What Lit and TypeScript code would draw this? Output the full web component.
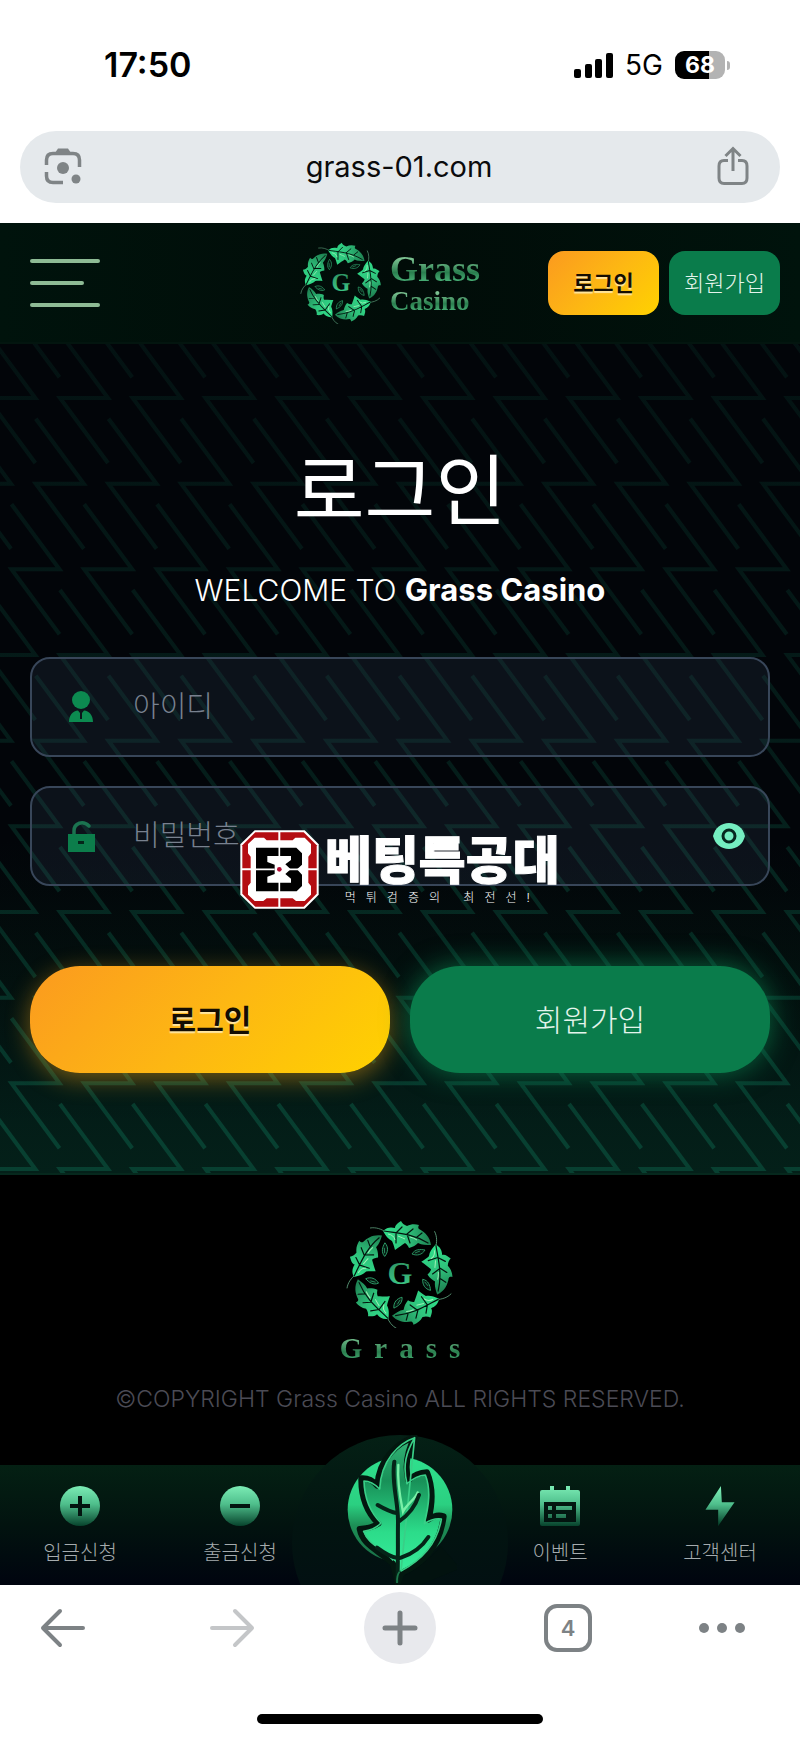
import { LitElement, html, css, svg, unsafeCSS } from "lit";
import { customElement, state } from "lit/decorators.js";

/* Repeating zigzag tile: 11 strokes across, three staggered rows. */
const zigzagTile = (() => {
  const stepX = 800 / 11;
  const stepY = 257 / 3;
  let d = "";
  for (let row = -1; row <= 3; row++) {
    const y = 56 + row * stepY;
    for (let col = -2; col <= 12; col++) {
      const x = 60 + col * stepX - (row * stepX) / 3;
      d += `M${x.toFixed(1)} ${(y - 65).toFixed(1)}l48 65h-48l48 65`;
    }
  }
  const image = `<svg xmlns="http://www.w3.org/2000/svg" width="800" height="257"><path d="${d}" fill="none" stroke="#0a5a45" stroke-opacity=".55" stroke-width="4"/></svg>`;
  return unsafeCSS(`url("data:image/svg+xml,${encodeURIComponent(image)}")`);
})();

@customElement("grass-wreath")
export class GrassWreath extends LitElement {
  static styles = css`
    :host { display: block; }
    .art { display: block; width: 100%; height: 100%; }
    .initial { font: bold 32px "Liberation Serif", serif; }
  `;

  render() {
    return html`
      <svg class="art" viewBox="-54 -54 108 108" role="img" aria-label="Grass Casino">
        <defs>
          <linearGradient id="leaf" x1="0" y1="0" x2="1" y2="0">
            <stop offset="0" stop-color="#2fe08a" /><stop offset=".5" stop-color="#2fc37c" /><stop offset="1" stop-color="#1d7f50" />
          </linearGradient>
          <linearGradient id="letter" x1="0" y1="0" x2="0" y2="1">
            <stop offset="0" stop-color="#2c8a5c" /><stop offset="1" stop-color="#3fcf8c" />
          </linearGradient>
        </defs>
        ${[0, 72, 144, 216, 288].map(
          (angle) => svg`
          <g transform="rotate(${angle})">
            <path d="M-30-46C-24-47-19-45-14-42" fill="none" stroke="#5d9d7b" stroke-width=".8" />
            <path d="M-17-43C-13-47-9-47-5-46C-5-49-2-51 1-53C2-51 4-49 7-48C11-50 15-50 19-49C18-47 18-46 19-45C25-42 30-37 31-29C26-29 22-29 18-31C16-29 13-27 9-26C8-28 7-30 5-31C2-29-1-27-5-24C-6-28-7-31-8-33C-12-35-14-38-17-43Z" fill="url(#leaf)" />
            <path d="M-16-43C-5-41 12-41 28-31M-4-41L2-47M-4-41L-4-31M7-40L13-45M7-40L10-31M17-37L22-41" fill="none" stroke="#03140d" stroke-width="1.2" stroke-linecap="round" />
            <path d="M-12-40Q-6-39-5-34M-2-38Q3-36 5-35M10-37Q14-36 17-34" fill="none" stroke="#9df0b4" stroke-width="1" />
            <path d="M12-20C15-25 20-25 25-24C22-19 17-18 12-20Z" fill="#05160f" stroke="#2c9b67" stroke-width=".9" />
            <path d="M15-21L20-23" stroke="#2c9b67" stroke-width=".8" />
          </g>`
        )}
        <text class="initial" x="0" y="10" text-anchor="middle" fill="url(#letter)">G</text>
      </svg>
    `;
  }
}

@customElement("app-root")
export class AppRoot extends LitElement {
  @state() private passwordVisible = false;

  static styles = css`
    :host {
      display: block;
      background: #fff;
      color: #fff;
      font-family: Inter, "Noto Sans CJK KR", sans-serif;
    }
    * { box-sizing: border-box; }
    svg { display: block; }
    a { color: inherit; text-decoration: none; }
    button { border: 0; padding: 0; background: none; font-family: inherit; cursor: pointer; }

    .status {
      display: flex;
      justify-content: space-between;
      align-items: center;
      padding: 45px 70px 46px 104px;
      color: #000;
    }
    .clock { font-size: 34px; line-height: 40px; font-weight: 600; }
    .signals { display: flex; align-items: center; gap: 12px; }
    .network { font-size: 28px; line-height: 32px; }
    .battery { display: flex; align-items: center; gap: 2px; }
    .charge {
      width: 50px;
      border-radius: 9px;
      background: linear-gradient(90deg, #000 68%, #b3b3b3 68%);
      color: #fff;
      font-size: 23px;
      line-height: 28px;
      font-weight: 700;
      text-align: center;
    }
    .terminal { width: 3px; height: 9px; border-radius: 0 3px 3px 0; background: #b3b3b3; }

    .address {
      display: flex;
      align-items: center;
      justify-content: space-between;
      margin: 0 20px 20px;
      padding: 0 26px 2px 24px;
      height: 72px;
      border-radius: 36px;
      background: #e5e9ec;
      color: #0b0b0c;
      font-size: 29px;
    }

    .header {
      display: grid;
      grid-template-columns: 270px 1fr auto;
      align-items: center;
      padding: 18px 20px 18px 30px;
      height: 119px;
      background: linear-gradient(90deg, #00130c, #010c08 50%, #00130c);
    }
    .menu { display: grid; gap: 18px; width: 70px; }
    .bar { height: 4px; border-radius: 2px; background: #8ebb95; }
    .bar.short { width: 54px; }
    .brand { display: flex; align-items: center; gap: 8px; }
    .brand-wreath { width: 82px; height: 82px; }
    .brand-name {
      display: grid;
      font-family: "Liberation Serif", serif;
      font-weight: 700;
    }
    .metal {
      background: linear-gradient(#7ec493 20%, #2a7f4f 60%, #4fb97e 90%);
      -webkit-background-clip: text;
      background-clip: text;
      color: transparent;
    }
    .brand-first { font-size: 36px; line-height: 36px; }
    .brand-second { font-size: 27px; line-height: 28px; }
    .account { display: flex; justify-content: flex-end; gap: 10px; }
    .gold {
      background: linear-gradient(135deg, #fb9a1f, #fdb713 50%, #ffd200);
      color: #140d02;
      font-weight: 700;
      text-shadow: 0 2px 1px #ffe6a0;
    }
    .green { background: #0a7c4b; color: #e4f4ec; font-weight: 300; }
    .small { width: 111px; height: 64px; padding-bottom: 4px; border-radius: 16px; font-size: 22px; }

    .login {
      position: relative;
      padding: 103px 30px 100px;
      border-top: 2px solid #03150f;
      background:
        linear-gradient(rgba(2, 5, 9, 0.72), rgba(2, 5, 9, 0.5) 50%, rgba(2, 8, 10, 0) 95%),
        ${zigzagTile} 0 -2px / 800px 257px,
        linear-gradient(#020509 60%, #03120f 75%, #031c17 92%, #042019);
    }
    .title { margin: 0; font-size: 77px; line-height: 88px; font-weight: 400; text-align: center; }
    .welcome { margin: 35px 0 47px; font-size: 30px; line-height: 40px; font-weight: 300; text-align: center; }
    .welcome strong { font-size: 31px; font-weight: 700; }
    .fields { display: grid; gap: 29px; }
    .field {
      display: flex;
      align-items: center;
      height: 100px;
      padding: 0 23px 0 29px;
      border: 2px solid #384659;
      border-radius: 20px;
      background: rgba(60, 78, 106, 0.18);
    }
    .field-icon { width: 72px; padding-left: 4px; }
    .input {
      flex: 1;
      min-width: 0;
      border: 0;
      outline: 0;
      padding: 0;
      background: none;
      color: #fff;
      font: 300 29px/44px Inter, "Noto Sans CJK KR", sans-serif;
    }
    .input::placeholder { color: #78818f; opacity: 1; }
    .actions { display: grid; grid-template-columns: 1fr 1fr; gap: 20px; margin-top: 80px; }
    .big { height: 107px; padding-bottom: 4px; border-radius: 50px; font-size: 30px; }
    .big.gold { box-shadow: 0 6px 24px rgba(253, 170, 20, 0.45); }
    .big.green { box-shadow: 0 0 28px rgba(10, 140, 84, 0.7); }

    .watermark {
      position: absolute;
      top: 486px;
      left: 30%;
      display: flex;
      align-items: center;
      gap: 6px;
    }
    .wm-text { display: grid; justify-items: center; }
    .wm-name { font-size: 51px; line-height: 56px; font-weight: 900; -webkit-text-stroke: 1px #fff; }
    .wm-line { font-size: 12px; line-height: 18px; font-weight: 300; letter-spacing: 10px; }

    .footer {
      display: grid;
      justify-items: center;
      padding: 45px 20px 51px;
      border-top: 2px solid #06281d;
      background: #000;
    }
    .footer-wreath { width: 108px; height: 108px; }
    .footer-name {
      font: bold 29px/40px "Liberation Serif", serif;
      letter-spacing: 12px;
      padding-left: 12px;
    }
    .copyright { margin: 16px 0 0; color: #4b4b55; font-size: 23px; line-height: 30px; font-weight: 300; }

    .tabs {
      position: relative;
      display: grid;
      grid-template-columns: repeat(5, 1fr);
      height: 120px;
      background: linear-gradient(#042013, #02130f 50%, #00040f);
    }
    .tab {
      display: grid;
      align-content: start;
      justify-items: center;
      gap: 12px;
      padding-top: 21px;
      color: #a5acae;
      font-size: 20px;
      line-height: 30px;
      font-weight: 300;
    }
    .tab.after { grid-column-start: 4; }
    .home {
      position: absolute;
      bottom: 0;
      left: calc(50% - 108px);
      display: grid;
      justify-items: center;
      width: 216px;
      height: 150px;
      overflow: hidden;
    }
    .home::before {
      content: "";
      grid-area: 1 / 1;
      width: 216px;
      height: 216px;
      border-radius: 50%;
      background: linear-gradient(#042015, #021410 40%, #021012 70%);
    }
    .home-leaf { grid-area: 1 / 1; }

    .browser {
      display: grid;
      grid-template-columns: 148px 1fr 1fr 1fr 148px;
      align-items: center;
      justify-items: center;
      padding-top: 7px;
      color: #7d8285;
    }
    .browser button { color: inherit; }
    .browser .muted { color: #c4c6c8; }
    .browser .first { justify-self: start; margin-left: 40px; }
    .browser .last { justify-self: end; margin-right: 55px; }
    .new-tab {
      display: grid;
      place-items: center;
      width: 72px;
      height: 72px;
      border-radius: 50%;
      background: #e8e9ed;
    }
    .count {
      width: 48px;
      height: 48px;
      border: 4px solid #7d8285;
      border-radius: 13px;
      font-size: 22px;
      font-weight: 600;
    }
    .indicator { width: 286px; height: 10px; margin: 50px auto 0; border-radius: 5px; background: #000; }
    .indicator-row { padding-bottom: 16px; }
  `;

  private header() {
    return html`
      <header class="header">
        <button class="menu" aria-label="메뉴">
          <span class="bar"></span><span class="bar short"></span><span class="bar"></span>
        </button>
        <a class="brand" href="#">
          <grass-wreath class="brand-wreath"></grass-wreath>
          <span class="brand-name">
            <span class="metal brand-first">Grass</span>
            <span class="metal brand-second">Casino</span>
          </span>
        </a>
        <div class="account">
          <button class="small gold">로그인</button>
          <button class="small green">회원가입</button>
        </div>
      </header>
    `;
  }

  private watermark() {
    return html`
      <div class="watermark">
        <svg width="79" height="79" viewBox="0 0 237 237" aria-hidden="true">
          <path d="M44 1H194L236 43V194L194 236H44L1 194V43Z" fill="#fff" />
          <path d="M46 7H191L230 46V191L191 230H46L7 191V46Z" fill="#b40d12" />
          <path d="M44 23H72L80 31H158L166 23H194L213 42V70L205 80V158L213 168V194L194 213H168L158 205H80L70 213H44L24 194V168L32 158V80L24 70V42Z" fill="#fff" />
          <path d="M118 3V234M3 118H234" stroke="#fff" stroke-width="6" />
          <path d="M48 53H169L186 70V104L171 118L186 134V168L170 184H48V144H78V94H48Z" fill="#000" />
          <path d="M48 90H80V148H48Z" fill="#000" />
          <path d="M82 78H153V90L136 103L152 118L136 132L153 146V158H82V140L104 132V104L82 96Z" fill="#fff" />
          <path d="M118 50V104M118 132V188M44 118H104M132 118H190" stroke="#fff" stroke-width="5" />
          <circle cx="118" cy="118" r="13" fill="#fff" />
          <circle cx="118" cy="118" r="7" fill="#b40d35" />
        </svg>
        <div class="wm-text">
          <span class="wm-name">베팅특공대</span>
          <span class="wm-line">먹튀검증의 최전선!</span>
        </div>
      </div>
    `;
  }

  private login() {
    return html`
      <main class="login">
        <h1 class="title">로그인</h1>
        <p class="welcome">WELCOME TO <strong>Grass Casino</strong></p>
        <form @submit=${(e: Event) => e.preventDefault()}>
          <div class="fields">
            <div class="field">
              <label class="field-icon" for="user" aria-label="아이디">
                <svg width="32" height="36" viewBox="0 0 32 36" fill="#0c8a50">
                  <circle cx="16" cy="11" r="9" />
                  <path d="M4 33C4 26 8 22 13 21.500L15 24V30H17V24L19 21.500C24 22 28 26 28 33Z" />
                </svg>
              </label>
              <input class="input" id="user" type="text" placeholder="아이디" autocomplete="username" />
            </div>
            <div class="field">
              <label class="field-icon" for="password" aria-label="비밀번호">
                <svg width="32" height="36" viewBox="0 0 32 36">
                  <path d="M9 17V13C9 5 18 2 24 8" fill="none" stroke="#1b7350" stroke-width="3.500" stroke-linecap="round" />
                  <path d="M3 16H30V34H3Z" fill="#0c7d4b" />
                  <path d="M13 23H19V26H13Z" fill="#04251a" />
                </svg>
              </label>
              <input class="input" id="password" type=${this.passwordVisible ? "text" : "password"}
                placeholder="비밀번호" autocomplete="current-password" />
              <button type="button" aria-label="비밀번호 표시"
                @click=${() => (this.passwordVisible = !this.passwordVisible)}>
                <svg width="32" height="28" viewBox="0 0 32 28">
                  <path d="M0 14C2 6 8 1 16 1S30 6 32 14C30 22 24 27 16 27S2 22 0 14Z" fill="#75eec1" />
                  <circle cx="16" cy="14" r="6" fill="#75eec1" stroke="#06281f" stroke-width="3" />
                </svg>
              </button>
            </div>
          </div>
          <div class="actions">
            <button class="big gold" type="submit">로그인</button>
            <button class="big green" type="button">회원가입</button>
          </div>
        </form>
        ${this.watermark()}
      </main>
    `;
  }

  private tabs() {
    return html`
      <nav class="tabs">
        <a class="tab" href="#">
          <svg width="40" height="40" viewBox="0 0 40 40">
            <defs><linearGradient id="mint" gradientUnits="userSpaceOnUse" x1="0" y1="0" x2="0" y2="40">
              <stop offset="0" stop-color="#7cecb5" /><stop offset=".45" stop-color="#4fbf8c" /><stop offset="1" stop-color="#07432c" />
            </linearGradient></defs>
            <circle cx="20" cy="20" r="20" fill="url(#mint)" />
            <path d="M20 10V30M10 20H30" stroke="#03140f" stroke-width="4" />
          </svg>
          입금신청
        </a>
        <a class="tab" href="#">
          <svg width="40" height="40" viewBox="0 0 40 40">
            <circle cx="20" cy="20" r="20" fill="url(#mint)" />
            <path d="M10 20H30" stroke="#03140f" stroke-width="4" />
          </svg>
          출금신청
        </a>
        <a class="tab after" href="#">
          <svg width="40" height="40" viewBox="0 0 40 40" fill="url(#mint)">
            <path fill-rule="evenodd" d="M2 4H10V0H14V4H26V0H30V4H38Q40 4 40 6V38Q40 40 38 40H2Q0 40 0 38V6Q0 4 2 4ZM4 16V36H36V16ZM8 20H12V24H8ZM16 20H32V24H16ZM8 28H12V32H8ZM16 28H26V32H16Z" />
          </svg>
          이벤트
        </a>
        <a class="tab" href="#">
          <svg width="40" height="40" viewBox="0 -2 40 44" fill="url(#mint)">
            <path d="M21-2L4 24H18L18 42L36 16H22Z" />
          </svg>
          고객센터
        </a>
        <a class="home" href="#" aria-label="홈">
          <svg class="home-leaf" width="114" height="150" viewBox="218 70 342 450">
            <defs>
              <linearGradient id="disc" x1="0" y1="0" x2="0" y2="1">
                <stop offset="0" stop-color="#2fe08d" /><stop offset=".45" stop-color="#2bd081" /><stop offset=".65" stop-color="#1d8f56" /><stop offset="1" stop-color="#1a6f46" />
              </linearGradient>
              <linearGradient id="blade" x1="0" y1="0" x2="0" y2="1">
                <stop offset="0" stop-color="#35b678" /><stop offset=".3" stop-color="#189058" /><stop offset=".65" stop-color="#2cdc8a" /><stop offset="1" stop-color="#3bf0a0" />
              </linearGradient>
            </defs>
            <circle cx="389" cy="294" r="157" fill="url(#disc)" />
            <path d="M384 500Q440 480 512 404L570 470L400 540Z" fill="#02120f" />
            <path d="M433 76C384 92 326 140 321 222Q300 198 273 200C272 250 288 300 324 336Q304 350 268 352C278 402 320 412 368 456L382 515L394 484C452 458 508 410 520 314Q498 306 474 324C486 280 490 230 470 182Q438 184 414 206C402 160 410 120 433 76Z"
              fill="url(#blade)" stroke="#03170f" stroke-width="18" stroke-linejoin="round" />
            <path d="M433 78C386 94 332 146 328 232Q304 208 281 208C282 250 294 296 332 334Q314 354 280 359C294 398 330 406 369 446M392 478C448 448 500 404 513 322Q490 318 462 336C476 280 482 234 465 190Q438 192 410 216C396 160 408 122 433 78Z"
              fill="none" stroke="#39cf87" stroke-width="5" stroke-linejoin="round" />
            <path d="M384 160C380 220 392 270 398 300C410 276 436 262 442 242" fill="none" stroke="#79f0a7" stroke-width="7" stroke-linecap="round" />
            <path d="M372 150C362 210 384 270 383 330C382 390 384 440 381 508M382 305Q356 300 322 280M385 330Q430 300 446 250M385 440Q360 438 320 408M392 438Q446 420 474 376" fill="none" stroke="#052418" stroke-width="12" stroke-linecap="round" />
            <path d="M388 480Q379 490 380 514" fill="none" stroke="#1d7a4d" stroke-width="5" />
          </svg>
        </a>
      </nav>
    `;
  }

  render() {
    return html`
      <div class="status">
        <span class="clock">17:50</span>
        <div class="signals">
          <svg width="39" height="25" viewBox="0 0 39 25" aria-hidden="true">
            <rect x="0" y="16" width="7" height="9" rx="2" /><rect x="11" y="11" width="7" height="14" rx="2" />
            <rect x="21" y="6" width="7" height="19" rx="2" /><rect x="32" y="0" width="7" height="25" rx="2" />
          </svg>
          <span class="network">5G</span>
          <div class="battery"><span class="charge">68</span><span class="terminal"></span></div>
        </div>
      </div>
      <div class="address">
        <button aria-label="이미지 검색">
          <svg width="38" height="38" viewBox="0 0 38 38" fill="none" stroke="#7f8486" stroke-width="3.500">
            <path d="M2.500 18V13Q2.500 6.500 9 6.500H29Q35.500 6.500 35.500 13V20M2.500 25V29Q2.500 35.500 9 35.500H19" />
            <path d="M11 6L14 1.500H24L27 6Z" fill="#7f8486" stroke="none" />
            <circle cx="19" cy="21" r="6" fill="#7f8486" stroke="none" />
            <circle cx="32" cy="32" r="4.500" fill="#7f8486" stroke="none" />
          </svg>
        </button>
        <span>grass-01.com</span>
        <button aria-label="공유">
          <svg width="38" height="40" viewBox="4 0 38 40" fill="none" stroke="#7f8486" stroke-width="3">
            <path d="M16 14.500H12Q7 14.500 7 20V32Q7 37.500 12 37.500H30Q35 37.500 35 32V20Q35 14.500 30 14.500H26M21 25V3M13.500 10L21 2.500L28.500 10" />
          </svg>
        </button>
      </div>
      ${this.header()} ${this.login()}
      <footer class="footer">
        <grass-wreath class="footer-wreath"></grass-wreath>
        <span class="metal footer-name">Grass</span>
        <p class="copyright">©COPYRIGHT Grass Casino ALL RIGHTS RESERVED.</p>
      </footer>
      ${this.tabs()}
      <div class="browser">
        <button class="first" aria-label="뒤로">
          <svg width="46" height="40" viewBox="0 0 46 40" fill="none" stroke="currentColor" stroke-width="4" stroke-linecap="round" stroke-linejoin="round"><path d="M43 20H3M20 3L3 20L20 37" /></svg>
        </button>
        <button class="muted" aria-label="앞으로">
          <svg width="46" height="40" viewBox="0 0 46 40" fill="none" stroke="currentColor" stroke-width="4" stroke-linecap="round" stroke-linejoin="round"><path d="M3 20H43M26 3L43 20L26 37" /></svg>
        </button>
        <button class="new-tab" aria-label="새 탭">
          <svg width="36" height="36" viewBox="0 0 36 36" stroke="currentColor" stroke-width="5" stroke-linecap="round"><path d="M18 3V33M3 18H33" /></svg>
        </button>
        <button class="count" aria-label="탭 4개">4</button>
        <button class="last" aria-label="더보기">
          <svg width="46" height="10" viewBox="0 0 46 10" fill="currentColor"><circle cx="5" cy="5" r="5" /><circle cx="23" cy="5" r="5" /><circle cx="41" cy="5" r="5" /></svg>
        </button>
      </div>
      <div class="indicator-row"><div class="indicator"></div></div>
    `;
  }
}
